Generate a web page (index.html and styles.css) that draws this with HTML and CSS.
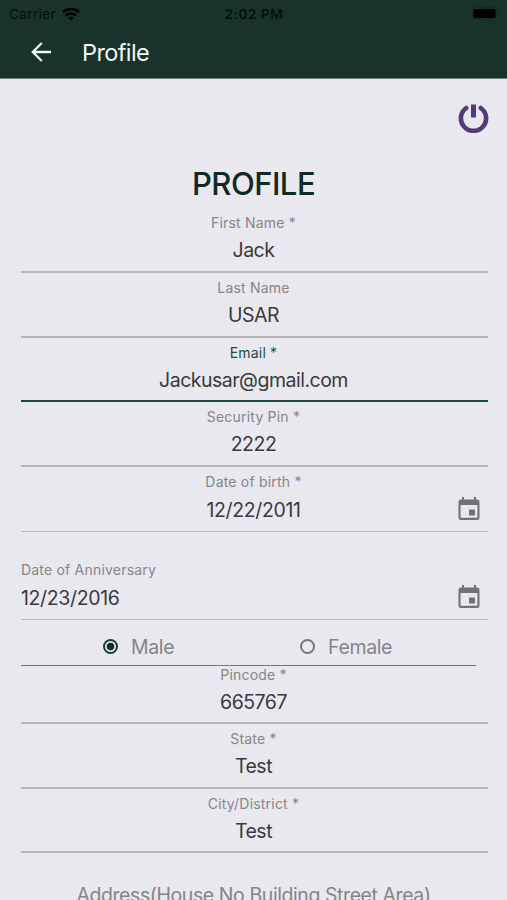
FILE: index.html
```html
<!DOCTYPE html>
<html lang="en">
<head>
<meta charset="utf-8">
<meta name="viewport" content="width=device-width">
<title>Profile</title>
<link rel="stylesheet" href="styles.css">
</head>
<body>
<header class="header">
  <div class="status">
    <div class="carrier"><span>Carrier</span>
      <svg width="18" height="14" viewBox="0 0 18 14" fill="none" stroke="#000" stroke-width="2.6"><path d="M1 5.2a11.5 11.5 0 0 1 16 0M4 8.5a7.2 7.2 0 0 1 10 0"/><path d="M9 13.5L6.3 10.8a4 4 0 0 1 5.4 0Z" fill="#000" stroke="none"/></svg>
    </div>
    <span class="clock">2:02 PM</span>
    <svg class="battery" width="28" height="13" viewBox="0 0 28 13"><rect x=".5" y=".5" width="24" height="11.5" rx="3" fill="none" stroke="#142a23"/><rect x="1.500" y="2" width="22" height="9" rx="1.500" fill="#000"/><path d="M26 4v4.500q1.500-.5 1.500-2.200T26 4" fill="#142a23"/></svg>
  </div>
  <div class="nav">
    <svg width="20" height="20" viewBox="0 0 20 20" fill="none" stroke="#f3f7f5" stroke-width="2.300"><path d="M20 10H2M10.800 1L1.800 10l9 9"/></svg>
    <span class="nav-title">Profile</span>
  </div>
</header>
<main class="page">
  <div class="power">
    <svg width="32" height="32" viewBox="0 0 32 32" fill="none" stroke="#523a7b" stroke-width="4.600" stroke-linecap="round"><path d="M9.200 7a12.600 12.600 0 1 0 14.600 0"/><path d="M16.500 3.500v13" stroke-linecap="butt" stroke-width="5"/></svg>
  </div>
  <h1 class="title">PROFILE</h1>
  <div class="field"><label class="label">First Name *</label><div class="value">Jack</div></div>
  <div class="field"><label class="label">Last Name</label><div class="value">USAR</div></div>
  <div class="field focused"><label class="label">Email *</label><div class="value">Jackusar@gmail.com</div></div>
  <div class="field"><label class="label">Security Pin *</label><div class="value">2222</div></div>
  <div class="field date"><label class="label">Date of birth *</label><div class="value">12/22/2011</div>
    <svg class="calendar" width="22" height="24" viewBox="0 0 22 24"><path fill="#727276" fill-rule="evenodd" d="M4 0h2v2.500h10V0h2v2.500h1.500Q21.500 2.500 21.500 5v15.500Q21.500 23 19 23H3Q.5 23 .5 20.500V5Q.5 2.500 3 2.500h1ZM2.600 8v12.800h16.800V8ZM11 12.500h6v6h-6Z"/></svg>
  </div>
  <div class="field date anniversary"><label class="label">Date of Anniversary</label><div class="value">12/23/2016</div>
    <svg class="calendar" width="22" height="24" viewBox="0 0 22 24"><path fill="#727276" fill-rule="evenodd" d="M4 0h2v2.500h10V0h2v2.500h1.500Q21.500 2.500 21.500 5v15.500Q21.500 23 19 23H3Q.5 23 .5 20.500V5Q.5 2.500 3 2.500h1ZM2.600 8v12.800h16.800V8ZM11 12.500h6v6h-6Z"/></svg>
  </div>
  <div class="gender">
    <div class="option"><span class="radio checked"></span><span>Male</span></div>
    <div class="option"><span class="radio"></span><span>Female</span></div>
  </div>
  <div class="field pincode"><label class="label">Pincode *</label><div class="value">665767</div></div>
  <div class="field"><label class="label">State *</label><div class="value">Test</div></div>
  <div class="field"><label class="label">City/District *</label><div class="value">Test</div></div>
  <div class="address">Address(House No Building Street Area)</div>
</main>
</body>
</html>
```
FILE: styles.css
```css
* { box-sizing: border-box; }
body { margin: 0; height: 900px; overflow: hidden; background: #e9e8ee; font-family: Inter, "Liberation Sans", sans-serif; }
svg { display: block; flex: none; }
.header { height: 79px; background: #19322b; border-bottom: 1px solid #75827f; }
.status { height: 27px; padding: 0 4px 0 9px; display: grid; grid-template-columns: 1fr auto 1fr; align-items: center; font-size: 13.5px; color: #06100d; }
.carrier { display: flex; align-items: center; gap: 6px; letter-spacing: .4px; }
.clock { font-weight: 600; letter-spacing: .6px; margin-right: 4px; }
.battery { justify-self: end; margin-right: 3px; }
.nav { height: 50px; padding-left: 31px; display: flex; align-items: center; gap: 31px; color: #f3f7f5; }
.nav-title { font-size: 23.5px; letter-spacing: -.6px; }
.page { padding: 0 19px 0 21px; }
.power { height: 81px; display: flex; justify-content: flex-end; padding: 22px 0 0; margin-right: -1px; }
.title { margin: 0 2px 0 0; height: 48px; line-height: 48px; text-align: center; font-size: 31px; font-weight: 500; letter-spacing: -.5px; color: #0d2b24; }
.field { height: 64.75px; padding-top: 6px; border-bottom: 2px solid #b5b4b9; display: flex; flex-direction: column; text-align: center; position: relative; }
.label { height: 18px; line-height: 18px; margin-right: 2px; font-size: 14px; color: #86858a; letter-spacing: .2px; }
.value { height: 36px; line-height: 37px; margin-right: 2px; font-size: 19.5px; color: #39393d; letter-spacing: -.5px; }
.focused { border-color: #19463d; }
.focused .label { color: #234b42; }
.date { border-bottom: 1px solid #bbbac0; }
.date .value { line-height: 38px; letter-spacing: -.35px; }
.calendar { position: absolute; right: 8px; bottom: 10px; }
.anniversary { height: 88px; padding-top: 29px; text-align: left; }
.gender { height: 46px; margin-right: 12px; border-bottom: 1px solid #77767b; padding: 9px 0 0 82px; display: flex; font-size: 19.5px; line-height: 36px; letter-spacing: -.35px; color: #858489; }
.option { display: flex; flex: none; width: 197px; height: 36px; align-items: center; gap: 13px; }
.option + .option { width: 170px; }
.radio { width: 15px; height: 15px; border: 2px solid #77767b; border-radius: 50%; flex: none; }
.checked { border-color: #193e36; background: radial-gradient(circle, #102d26 0 3.5px, transparent 4.2px); }
.pincode { height: 58px; padding-top: 0; }
.pincode .label { line-height: 17px; }
.address { margin-right: 2px; padding-top: 30px; line-height: 24px; font-size: 19.5px; letter-spacing: -.42px; text-align: center; color: #858489; white-space: nowrap; }
```
